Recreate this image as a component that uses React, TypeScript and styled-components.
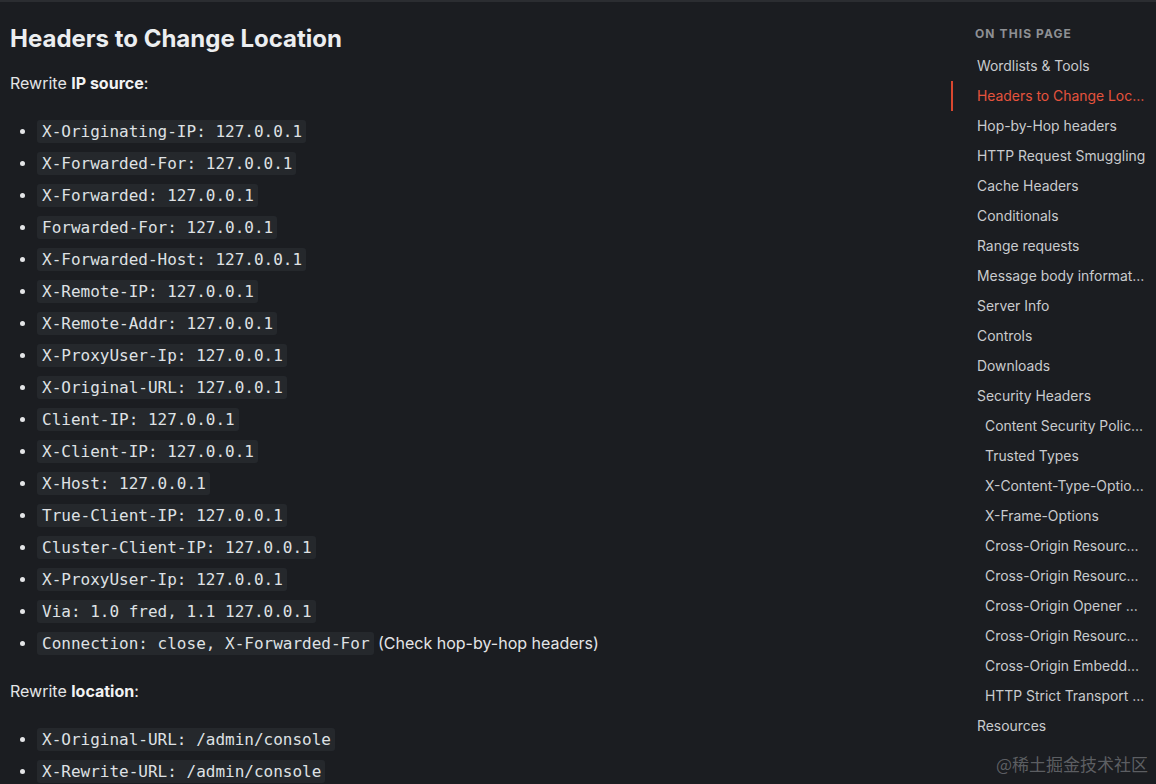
import React from "react";
import styled, { createGlobalStyle } from "styled-components";

const Global = createGlobalStyle`
  html, body { margin: 0; padding: 0; background: #1b1d21; }
  body { font-family: Inter, "Noto Sans", sans-serif; color: #e6e7e9; }
  * { box-sizing: border-box; }
`;

const Page = styled.div`
  width: 1156px;
  height: 784px;
  overflow: hidden;
  border-top: 2px solid #2b2d31;
  display: flex;
  position: relative;
  background: #1b1d21;
`;

const Main = styled.main`
  flex: 1;
  padding: 21px 0 0 10px;
`;

const Heading = styled.h2`
  margin: 0;
  font-size: 24px;
  line-height: 32px;
  font-weight: 700;
  color: #eceef0;
`;

const Para = styled.p<{ $top: number }>`
  margin: ${(p) => p.$top}px 0 0;
  font-size: 16px;
  line-height: 24px;
  color: #e4e5e7;
  strong { font-weight: 700; color: #f1f2f3; }
`;

const List = styled.ul`
  margin: 20px 0 0;
  padding: 0 0 0 27px;
  list-style: disc;
`;

const Item = styled.li`
  font-size: 16px;
  line-height: 32px;
  height: 32px;
  color: #e4e5e7;
  &::marker { color: #e4e5e7; font-size: 15px; }
`;

const Code = styled.code`
  font-family: "DejaVu Sans Mono", "Liberation Mono", monospace;
  font-size: 16px;
  line-height: 1;
  background: #25282c;
  color: #dfe1e4;
  padding: 2px 4px 2px 5px;
  border-radius: 3px;
`;

const Aside = styled.aside`
  width: 205px;
  flex: none;
  padding: 23px 10px 0 0;
`;

const AsideTitle = styled.div`
  font-size: 12px;
  font-weight: 700;
  letter-spacing: 1.1px;
  text-transform: uppercase;
  color: #8e9094;
  line-height: 18px;
  padding-left: 24px;
  margin-bottom: 8px;
`;

const Nav = styled.nav`
  display: flex;
  flex-direction: column;
`;

const NavLink = styled.a<{ $active?: boolean; $sub?: boolean }>`
  display: block;
  height: 30px;
  line-height: 30px;
  font-size: 13.9px;
  padding-left: ${(p) => (p.$sub ? 32 : 24)}px;
  color: ${(p) => (p.$active ? "#e5533d" : "#c9cbce")};
  border-left: 2px solid ${(p) => (p.$active ? "#d9472f" : "transparent")};
  white-space: nowrap;
  overflow: hidden;
  text-overflow: ellipsis;
  text-decoration: none;
`;

const Watermark = styled.div`
  position: absolute;
  right: 8px;
  bottom: 8px;
  font-family: "Noto Sans CJK SC", sans-serif;
  font-size: 17px;
  color: rgba(150, 152, 156, 0.55);
`;

const ipHeaders: { code: string; note?: string }[] = [
  { code: "X-Originating-IP: 127.0.0.1" },
  { code: "X-Forwarded-For: 127.0.0.1" },
  { code: "X-Forwarded: 127.0.0.1" },
  { code: "Forwarded-For: 127.0.0.1" },
  { code: "X-Forwarded-Host: 127.0.0.1" },
  { code: "X-Remote-IP: 127.0.0.1" },
  { code: "X-Remote-Addr: 127.0.0.1" },
  { code: "X-ProxyUser-Ip: 127.0.0.1" },
  { code: "X-Original-URL: 127.0.0.1" },
  { code: "Client-IP: 127.0.0.1" },
  { code: "X-Client-IP: 127.0.0.1" },
  { code: "X-Host: 127.0.0.1" },
  { code: "True-Client-IP: 127.0.0.1" },
  { code: "Cluster-Client-IP: 127.0.0.1" },
  { code: "X-ProxyUser-Ip: 127.0.0.1" },
  { code: "Via: 1.0 fred, 1.1 127.0.0.1" },
  { code: "Connection: close, X-Forwarded-For", note: " (Check hop-by-hop headers)" },
];

const locHeaders = ["X-Original-URL: /admin/console", "X-Rewrite-URL: /admin/console"];

const toc: { label: string; sub?: boolean; active?: boolean }[] = [
  { label: "Wordlists & Tools" },
  { label: "Headers to Change Location", active: true },
  { label: "Hop-by-Hop headers" },
  { label: "HTTP Request Smuggling" },
  { label: "Cache Headers" },
  { label: "Conditionals" },
  { label: "Range requests" },
  { label: "Message body information" },
  { label: "Server Info" },
  { label: "Controls" },
  { label: "Downloads" },
  { label: "Security Headers" },
  { label: "Content Security Policy (CSP)", sub: true },
  { label: "Trusted Types", sub: true },
  { label: "X-Content-Type-Options", sub: true },
  { label: "X-Frame-Options", sub: true },
  { label: "Cross-Origin Resource Policy (CORP)", sub: true },
  { label: "Cross-Origin Resource Sharing (CORS)", sub: true },
  { label: "Cross-Origin Opener Policy (COOP)", sub: true },
  { label: "Cross-Origin Resource Policy", sub: true },
  { label: "Cross-Origin Embedder Policy (COEP)", sub: true },
  { label: "HTTP Strict Transport Security (HSTS)", sub: true },
  { label: "Resources" },
];

export default function App() {
  return (
    <>
      <Global />
      <Page>
        <Main>
          <Heading>Headers to Change Location</Heading>
          <Para $top={16}>
            Rewrite <strong>IP source</strong>:
          </Para>
          <List>
            {ipHeaders.map((h, i) => (
              <Item key={i}>
                <Code>{h.code}</Code>
                {h.note}
              </Item>
            ))}
          </List>
          <Para $top={20}>
            Rewrite <strong>location</strong>:
          </Para>
          <List>
            {locHeaders.map((c) => (
              <Item key={c}>
                <Code>{c}</Code>
              </Item>
            ))}
          </List>
        </Main>
        <Aside>
          <AsideTitle>On this page</AsideTitle>
          <Nav>
            {toc.map((t, i) => (
              <NavLink key={i} $sub={t.sub} $active={t.active} href="#">
                {t.label}
              </NavLink>
            ))}
          </Nav>
        </Aside>
        <Watermark>@稀土掘金技术社区</Watermark>
      </Page>
    </>
  );
}
